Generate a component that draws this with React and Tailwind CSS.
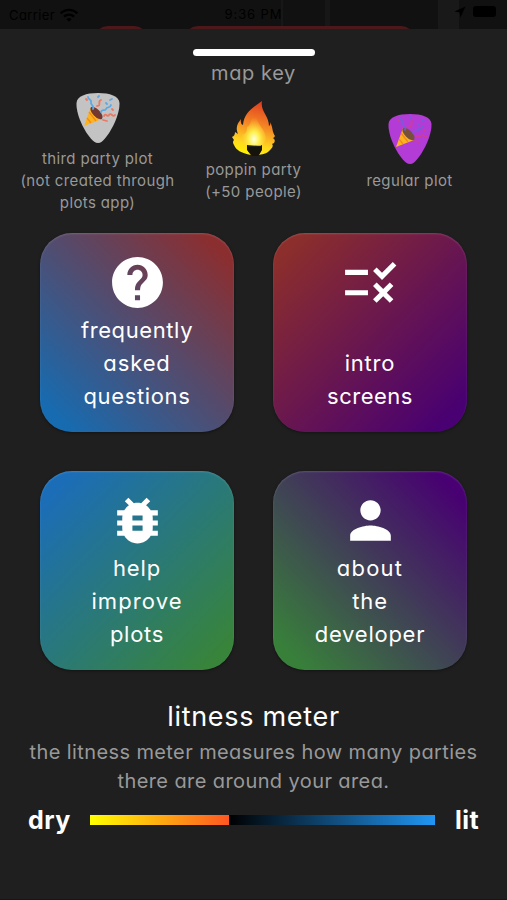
import { MdBugReport, MdHelp, MdPerson, MdRule, MdWifi } from 'react-icons/md';

const cards = [
    {
        icon: MdHelp,
        lines: [
            { text: 'frequently', track: 'tracking-[0.600px]' },
            { text: 'asked', track: 'tracking-[0.900px]' },
            { text: 'questions', track: 'tracking-[0.650px]' },
        ],
        bg: 'bg-linear-to-bl/srgb from-[#8b2e30] from-8% to-[#176bb0] to-92%',
    },
    {
        icon: MdRule,
        lines: [
            { text: 'intro', track: 'tracking-[0.800px]' },
            { text: 'screens', track: 'tracking-[0.500px]' },
        ],
        bg: 'bg-linear-to-br/srgb from-[#8b2e2c] from-8% to-[#480072] to-92%',
    },
    {
        icon: MdBugReport,
        lines: [
            { text: 'help', track: 'tracking-[0.900px]' },
            { text: 'improve', track: 'tracking-[1.100px]' },
            { text: 'plots', track: 'tracking-[0.700px]' },
        ],
        bg: 'bg-linear-to-br/srgb from-[#1b6db8] from-8% to-[#38843b] to-92%',
    },
    {
        icon: MdPerson,
        lines: [
            { text: 'about', track: 'tracking-[1.200px]' },
            { text: 'the', track: 'tracking-[0.900px]' },
            { text: 'developer', track: 'tracking-[0.750px]' },
        ],
        bg: 'bg-linear-to-tr/srgb from-[#38803a] from-8% to-[#480072] to-92%',
    },
];

function Pick({ color, faded }) {
    return (
        <svg viewBox="0 0 46 52" className="w-[46px] h-[52px]">
            <path d="M23 1C35 1 44 4 44.500 11C45 24 34 44 27 49.500Q23 52.500 19 49.500C11 43 1 24 1.500 11C2 4 11 1 23 1Z" fill={color} />
            <path d="M16 15L27 27L9 34Z" fill="#fcb322" />
            <path d="M14 20l7 9M12 26l4 5" stroke="#f28c13" strokeWidth="1.300" />
            <ellipse cx="21.500" cy="21" rx="3.600" ry="8" transform="rotate(-44 21.500 21)" fill={faded ? '#765039' : '#73382f'} />
            <g fill="none" strokeWidth="1.800" strokeLinecap="round" opacity={faded ? 0.75 : 1}>
                <path d="M18 17c2-3-3-4-2-7s-3-2-3-5M26 20c1-4 4 0 5-3s4 0 5-4M35 8l2-1M23 5l1-1M31 11l1 1" stroke={faded ? '#6865dc' : '#5aa9e6'} />
                <path d="M22 14c5 0 0-5 4-6M29 24c2-4 3 2 5-1s4 3 6 0M28 28l4 1M11 7l1 1M37 17l1 1" stroke={faded ? '#d73f82' : '#e87963'} />
            </g>
        </svg>
    );
}

function Flame() {
    return (
        <svg viewBox="0 0 46 56" className="w-[46px] h-[56px]">
            <defs>
                <linearGradient id="fire" x1="0.600" y1="0" x2="0.400" y2="1">
                    <stop offset="0" stopColor="#df3d20" />
                    <stop offset="0.450" stopColor="#f58a25" />
                    <stop offset="0.800" stopColor="#ffd91f" />
                    <stop offset="1" stopColor="#fff200" />
                </linearGradient>
                <radialGradient id="glow" cx="0.500" cy="0.800" r="0.650">
                    <stop offset="0" stopColor="#ffffe0" />
                    <stop offset="0.350" stopColor="#fff04b" />
                    <stop offset="1" stopColor="#ffb829" stopOpacity="0" />
                </radialGradient>
            </defs>
            <path d="M31 1C29 11 38 16 38 26Q40 25 39 22C42 27 41 32 44 36Q43 38 42 38Q45 40 43 43L41 44Q43 46 40 49C37 53 33 54 28 55L31 50V45H16V50L20 55C10 53 5 50 3 45Q1 42 3 40L1 37Q4 36 4 32L7 34C4 27 7 23 10 19Q9 24 12 25C13 13 21 8 31 1Z" fill="url(#fire)" />
            <path d="M26 12C23 23 34 27 35 38C34 43 32 44 30 46L15 45C9 43 12 38 11 34C15 35 16 31 16 27C21 24 19 18 26 12Z" fill="url(#glow)" />
            <path d="M16 45l2 2h11l2-2-1 6-3 5h-6l-4-5z" fill="#16130b" />
        </svg>
    );
}

function StatusBar() {
    return (
        <div className="relative flex h-[29px] items-start justify-between overflow-hidden bg-[#111] px-[9px] pt-[5px] text-[13px] leading-[18px] text-black">
            <div className="absolute left-[281px] top-0 h-full w-[2px] bg-[#171717]" />
            <div className="absolute left-[325px] top-0 h-full w-[5px] bg-[#171717]" />
            <div className="absolute left-[438px] top-0 h-full w-[21px] bg-[#191919]" />
            <div className="absolute left-[94px] top-[26px] h-[30px] w-[54px] rounded-[14px] bg-[#4c181a]" />
            <div className="absolute left-[184px] top-[26px] h-[30px] w-[231px] rounded-[14px] bg-[#4c181a]" />
            <div className="relative flex w-[150px] items-center gap-1">
                <span className="text-[13px] tracking-[0.400px]">Carrier</span>
                <MdWifi className="size-[20px]" />
            </div>
            <span className="relative tracking-[0.900px]">9:36 PM</span>
            <div className="relative flex w-[150px] items-center justify-end gap-[7px] pr-[2px]">
                <svg viewBox="0 0 12 12" className="mt-px size-3"><path d="M11.500 0.500L0.500 5.500L5.500 6.500L6.500 11.500Z" /></svg>
                <div className="h-[11px] w-[23px] rounded-[3px] bg-black" />
            </div>
        </div>
    );
}

export default function App() {
    return (
        <div className="flex h-[900px] w-[507px] flex-col overflow-hidden border-b border-[#1c1517] bg-[#1f1f1f] font-[Inter,sans-serif] [font-feature-settings:'cv11']">
            <StatusBar />

            <div className="mt-[20px] ml-[192.500px] h-[7px] w-[122px] shrink-0 rounded-full bg-white" />
            <h1 className="mt-[2px] text-center text-[20px] leading-[30px] tracking-[0.600px] text-[#999]">map key</h1>

            <div className="grid h-[126px] grid-cols-[156px_156px_156px] justify-center text-center text-[15px] leading-[22px] tracking-[0.380px] text-[#999]">
                <div className="flex flex-col items-center pt-[4px]">
                    <Pick color="#c3c3c3" />
                    <p className="mt-[4px] whitespace-nowrap">third party plot<br />(not created through<br />plots app)</p>
                </div>
                <div className="flex flex-col items-center pt-[12px]">
                    <Flame />
                    <p className="mt-[3px] whitespace-nowrap">poppin party<br />(+50 people)</p>
                </div>
                <div className="flex flex-col items-center pt-[25px]">
                    <Pick color="#b33bd6" faded />
                    <p className="mt-[5px] whitespace-nowrap">regular plot</p>
                </div>
            </div>

            <div className="mt-[19px] grid grid-cols-[194px_194px] gap-x-[39px] gap-y-[39px] pl-[40px]">
                {cards.map(({ icon: Icon, lines, bg }) => (
                    <div
                        key={lines[0].text}
                        className={`flex h-[199px] flex-col items-center justify-between rounded-[32px] pt-[19px] pb-[19px] text-[22px] leading-[33px] text-white shadow-[inset_0_1px_2px_rgba(255,255,255,0.15),0_1px_3px_rgba(0,0,0,0.4)] ${bg}`}
                    >
                        <Icon className="size-[61px]" />
                        <div className="flex flex-col items-center">
                            {lines.map(({ text, track }) => (
                                <span key={text} className={track}>{text}</span>
                            ))}
                        </div>
                    </div>
                ))}
            </div>

            <h2 className="mt-[28px] text-center text-[27px] leading-[38px] tracking-[0.700px] text-white">litness meter</h2>
            <p className="mt-[2px] whitespace-nowrap text-center text-[20px] leading-[29px] tracking-[0.400px] text-[#999]">
                the litness meter measures how many parties
                <br />
                there are around your area.
            </p>

            <div className="mt-[9px] flex items-center pl-[28px] text-[25px] leading-[30px] font-bold text-white">
                <span className="w-[62px] tracking-[0.500px]">dry</span>
                <div className="flex h-[10px] w-[345px]">
                    <div className="w-[139px] bg-linear-to-r/srgb from-[#ffff00] to-[#ff5722]" />
                    <div className="flex-1 bg-linear-to-r/srgb from-black to-[#2196f3]" />
                </div>
                <span className="ml-[20px] tracking-[0.500px]">lit</span>
            </div>
        </div>
    );
}
